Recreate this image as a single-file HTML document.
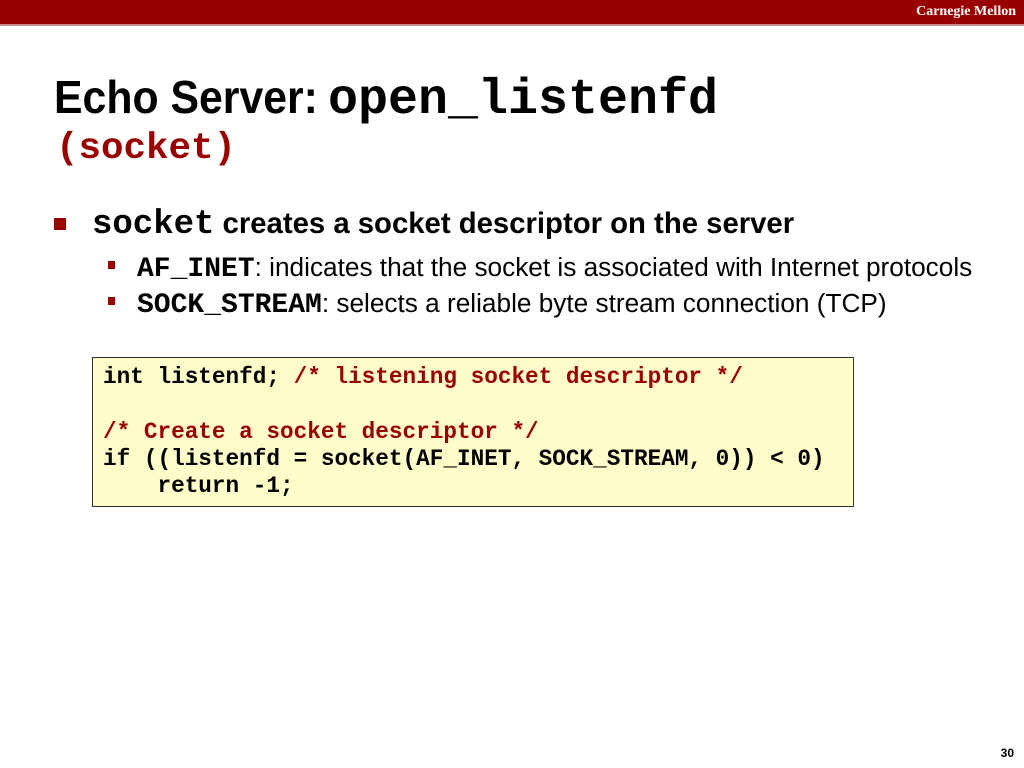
<!DOCTYPE html>
<html><head><style>
body{margin:0;width:1024px;height:768px;background:#fff;position:relative;overflow:hidden;font-family:"Liberation Sans",sans-serif}
.bar{position:absolute;left:0;top:0;width:1024px;height:24px;background:#990000;border-bottom:2px solid #c88}
.cm{position:absolute;right:8px;top:4px;color:#fff;font:bold 14px "Liberation Serif",serif}
.t{position:absolute;left:54px;top:70px;font-size:46px;font-weight:bold;white-space:nowrap;transform:scaleX(.93);transform-origin:left}
.tm{position:absolute;left:328px;top:72px;font-size:50px;white-space:nowrap}
.mono{font-family:"Liberation Mono",monospace;font-weight:bold}
.t2{position:absolute;left:56px;top:128px;font-size:37.5px;color:#990000}
.l1{position:absolute;left:54px;top:206px;font-size:29.3px;font-weight:bold;white-space:nowrap}
.l1 .b{display:inline-block;width:12px;height:12px;background:#990000;margin-right:26px;vertical-align:3px}
.l2{position:absolute;left:108px;font-size:26.2px;white-space:nowrap}
.l2 .b{display:inline-block;width:7px;height:8px;background:#990000;margin-right:22px;vertical-align:7px}
.code{position:absolute;left:92px;top:357px;width:762px;height:150px;background:#fefdc9;border:1px solid #333;box-sizing:border-box;padding:6px 10px;font:bold 22.7px/27.3px "Liberation Mono",monospace;white-space:pre;color:#000}
.c{color:#990000}
.pn{position:absolute;right:10px;top:746px;font-size:12px;font-weight:bold}
</style></head><body>
<div class="bar"><span class="cm">Carnegie Mellon</span></div>
<div class="t">Echo Server:</div>
<div class="tm mono">open_listenfd</div>
<div class="t2 mono">(socket)</div>
<div class="l1"><span class="b"></span><span class="mono" style="font-size:34px">socket</span> creates a socket descriptor on the server</div>
<div class="l2" style="top:252px"><span class="b"></span><span class="mono" style="font-size:28px">AF_INET</span>: indicates that the socket is associated with Internet protocols</div>
<div class="l2" style="top:288px"><span class="b"></span><span class="mono" style="font-size:28px">SOCK_STREAM</span>: selects a reliable byte stream connection (TCP)</div>
<div class="code">int listenfd; <span class="c">/* listening socket descriptor */</span>

<span class="c">/* Create a socket descriptor */</span>
if ((listenfd = socket(AF_INET, SOCK_STREAM, 0)) &lt; 0)
    return -1;</div>
<div class="pn">30</div>
</body></html>
